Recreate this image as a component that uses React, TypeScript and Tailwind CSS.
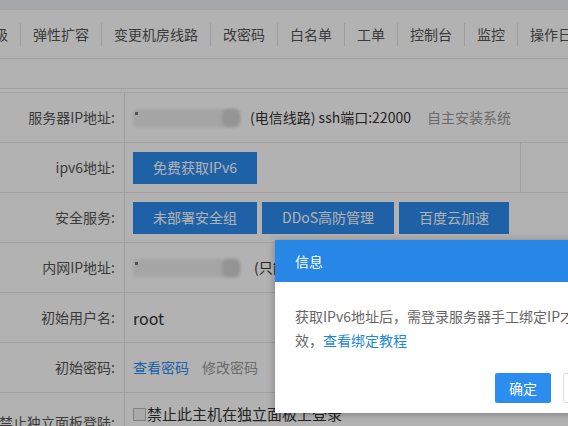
import React from 'react';

const navItems = ['升级', '弹性扩容', '变更机房线路', '改密码', '白名单', '工单', '控制台', '监控', '操作日志'];

function Blur({ w }: { w: number }) {
  // 打码的IP
  return (
    <div className="relative h-[18px] shrink-0" style={{ width: w }}>
      <div className="absolute inset-0 rounded-[4px] bg-[#ececec] blur-[1.5px]" />
      <div className="absolute right-0 top-0 h-full w-[18px] rounded-[6px] bg-[#d4d4d4] blur-[1.5px]" />
      <div className="absolute left-[2px] top-[3px] h-[3px] w-[3px] bg-[#777]" />
    </div>
  );
}

function Row({ label, children, last }: { label: string; children: React.ReactNode; last?: boolean }) {
  return (
    <div className={`flex h-[50px] border-b border-[#e6e6e6] ${last ? 'h-[60px]' : ''}`}>
      <div className={`w-[125px] shrink-0 border-r border-[#e6e6e6] pr-[9px] text-right text-[14px] text-[#555] flex justify-end ${last ? 'items-start pt-[19px] whitespace-nowrap' : 'items-center'}`}>
        {label}
      </div>
      <div className={`flex flex-1 pl-2 text-[14px] text-[#333] ${last ? 'items-start pt-[10px]' : 'items-center'}`}>
        {children}
      </div>
    </div>
  );
}

function BlueBtn({ children }: { children: React.ReactNode }) {
  return (
    <button className="h-8 bg-[#2d8cf0] px-5 text-[14px] text-white whitespace-nowrap">{children}</button>
  );
}

export default function App() {
  return (
    <div
      className="relative h-[426px] w-[568px] overflow-hidden bg-white"
      style={{ fontFamily: '"Noto Sans CJK SC", "Microsoft YaHei", sans-serif' }}
    >
      {/* 顶部条 */}
      <div className="h-[10px] bg-[#eceef1]" />

      {/* 导航 */}
      <div className="flex h-[49px] items-center border-b border-[#e6e6e6] ml-[-32px] whitespace-nowrap">
        {navItems.map((item, i) => (
          <React.Fragment key={item}>
            {i > 0 && <span className="h-[23px] w-px shrink-0 bg-[#e2e2e2]" />}
            <span className="shrink-0 px-3 text-[14px] text-[#555]">{item}</span>
          </React.Fragment>
        ))}
      </div>

      <div className="h-[30px] border-b border-[#e6e6e6]" />
      <div className="h-[3px]" />

      {/* 信息表 */}
      <div className="border-t border-[#ececec]">
        <Row label="服务器IP地址:">
          <Blur w={107} />
          <span className="ml-[10px] whitespace-nowrap">(电信线路) ssh端口:22000</span>
          <span className="ml-4 whitespace-nowrap text-[#999]">自主安装系统</span>
        </Row>
        <Row label="ipv6地址:">
          <div className="flex h-full flex-1 items-center">
            <BlueBtn>免费获取IPv6</BlueBtn>
          </div>
          <div className="h-full w-[48px] border-l border-[#e6e6e6]" />
        </Row>
        <Row label="安全服务:">
          <div className="flex gap-[5px]">
            <BlueBtn>未部署安全组</BlueBtn>
            <BlueBtn>DDoS高防管理</BlueBtn>
            <BlueBtn>百度云加速</BlueBtn>
          </div>
        </Row>
        <Row label="内网IP地址:">
          <Blur w={107} />
          <span className="ml-[14px] whitespace-nowrap">(只能内网访问)</span>
        </Row>
        <Row label="初始用户名:">
          <span className="text-[16px]">root</span>
        </Row>
        <Row label="初始密码:">
          <span className="text-[#2d8cf0]">查看密码</span>
          <span className="ml-[13px] text-[#999]">修改密码</span>
        </Row>
        <Row label="禁止独立面板登陆:" last>
          <label className="flex items-center whitespace-nowrap text-[15px]">
            <span className="mr-px h-[13px] w-[13px] border border-[#bbb] bg-[#f4f4f4]" />
            禁止此主机在独立面板上登录
          </label>
        </Row>
      </div>

      {/* 遮罩 */}
      <div className="absolute inset-0 bg-black/30" />

      {/* 弹窗 */}
      <div className="absolute left-[275px] top-[240px] w-[364px] bg-white shadow-[0_1px_8px_rgba(0,0,0,0.3)]">
        <div className="flex h-[42px] items-center bg-[#2786e6] px-5 text-[14px] text-white">信息</div>
        <div className="px-5 pt-[22px] text-[14px] leading-[24px] text-[#666]">
          <div className="whitespace-nowrap">获取IPv6地址后，需登录服务器手工绑定IP才能生</div>
          <div>
            效，<span className="text-[#1e88d6]">查看绑定教程</span>
          </div>
        </div>
        <div className="flex justify-end gap-3 px-5 pb-[10px] pt-[21px]">
          <button className="h-[30px] w-[56px] rounded-[2px] bg-[#2d8cf0] text-[14px] text-white">确定</button>
          <button className="h-[30px] w-[56px] rounded-[2px] border border-[#dedede] bg-white text-[14px] text-[#333]">取消</button>
        </div>
      </div>
    </div>
  );
}
